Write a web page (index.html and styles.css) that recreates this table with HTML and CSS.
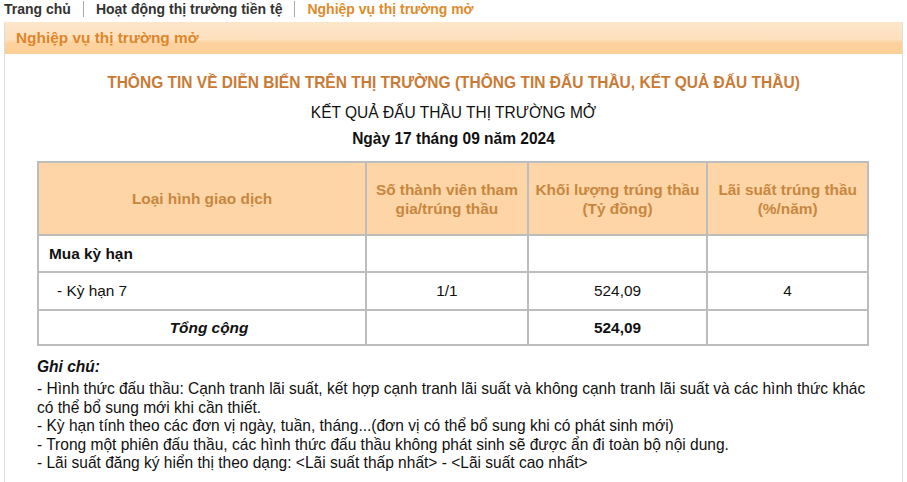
FILE: index.html
```html
<!DOCTYPE html>
<html lang="vi">
<head>
<meta charset="utf-8">
<link rel="stylesheet" href="styles.css">
</head>
<body>
<nav class="crumbs">
  <span class="crumb">Trang chủ</span>
  <span class="sep"></span>
  <span class="crumb">Hoạt động thị trường tiền tệ</span>
  <span class="sep"></span>
  <span class="crumb active">Nghiệp vụ thị trường mở</span>
</nav>
<section class="box">
  <h2 class="box-head">Nghiệp vụ thị trường mở</h2>
  <div class="box-body">
    <h1 class="title">THÔNG TIN VỀ DIỄN BIẾN TRÊN THỊ TRƯỜNG (THÔNG TIN ĐẤU THẦU, KẾT QUẢ ĐẤU THẦU)</h1>
    <p class="subtitle">KẾT QUẢ ĐẤU THẦU THỊ TRƯỜNG MỞ</p>
    <p class="date">Ngày 17 tháng 09 năm 2024</p>
    <table class="result">
      <colgroup>
        <col class="c1"><col class="c2"><col class="c3"><col class="c4">
      </colgroup>
      <thead>
        <tr>
          <th>Loại hình giao dịch</th>
          <th>Số thành viên tham gia/trúng thầu</th>
          <th>Khối lượng trúng thầu (Tỷ đồng)</th>
          <th>Lãi suất trúng thầu (%/năm)</th>
        </tr>
      </thead>
      <tbody>
        <tr class="r1"><td class="group">Mua kỳ hạn</td><td></td><td></td><td></td></tr>
        <tr class="r2"><td class="item">- Kỳ hạn 7</td><td class="num">1/1</td><td class="num">524,09</td><td class="num">4</td></tr>
        <tr class="r3"><td class="total">Tổng cộng</td><td></td><td class="num strong">524,09</td><td></td></tr>
      </tbody>
    </table>
    <div class="notes">
      <p class="notes-head">Ghi chú:</p>
      <p>- Hình thức đấu thầu: Cạnh tranh lãi suất, kết hợp cạnh tranh lãi suất và không cạnh tranh lãi suất và các hình thức khác có thể bổ sung mới khi cần thiết.</p>
      <p>- Kỳ hạn tính theo các đơn vị ngày, tuần, tháng...(đơn vị có thể bổ sung khi có phát sinh mới)</p>
      <p>- Trong một phiên đấu thầu, các hình thức đấu thầu không phát sinh sẽ được ẩn đi toàn bộ nội dung.</p>
      <p>- Lãi suất đăng ký hiển thị theo dạng: &lt;Lãi suất thấp nhất&gt; - &lt;Lãi suất cao nhất&gt;</p>
    </div>
  </div>
</section>
</body>
</html>
```
FILE: styles.css
```css
* { box-sizing: border-box; }
html, body { margin: 0; padding: 0; background: #fff; }
body {
  font-family: "Liberation Sans", Arial, sans-serif;
  font-size: 14px;
  color: #111;
  padding: 0 4px;
  overflow: hidden;
}
.crumbs {
  display: flex;
  align-items: center;
  height: 18px;
  font-weight: bold;
  font-size: 14px;
  color: #333;
}
.sep {
  width: 1px;
  height: 16px;
  background: #aaa;
  margin: 0 12px;
}
.crumb.active { color: #e08a2a; }
.box {
  margin-top: 4px;
  border-left: 1px solid #ddd;
  border-right: 1px solid #ddd;
}
.box-head {
  margin: 0;
  height: 32px;
  line-height: 32px;
  padding-left: 11px;
  font-size: 15.4px;
  font-weight: bold;
  color: #e0862a;
  background: linear-gradient(#fde6ca 0%, #fde0bd 55%, #fdd29e 65%, #fdcf98 100%);
}
.box-body { padding: 0 32px 20px 32px; }
.title, .subtitle, .date {
  text-align: center;
  font-size: 17px;
  line-height: 20px;
  transform: scaleX(0.913);
}
.title {
  margin: 19px 0 0;
  font-weight: bold;
  color: #c97b36;
}
.subtitle { margin: 10px 0 0; color: #111; }
.date { margin: 6px 0 0; font-weight: bold; }
.result {
  margin-top: 12px;
  width: 832px;
  border-collapse: collapse;
  font-size: 15.4px;
}
.c1 { width: 329px; }
.c2 { width: 162px; }
.c3 { width: 180px; }
.c4 { width: 161px; }
.result th, .result td { border: 2px solid #bdbdbd; }
.result th {
  height: 73px;
  background: #fdd5a7;
  color: #c8873f;
  font-weight: bold;
  padding: 0 6px;
  line-height: 19px;
}
.result td { padding: 0 10px; }
.r1 td { height: 37px; }
.r2 td { height: 38px; }
.r3 td { height: 35px; }
.group { font-weight: bold; }
.item { padding-left: 18px !important; }
.total { text-align: center; font-weight: bold; font-style: italic; padding-left: 24px !important; }
.num { text-align: center; }
.strong { font-weight: bold; }
.notes {
  margin-top: 12px;
  width: 911px;
  font-size: 17px;
  line-height: 18.45px;
  transform: scaleX(0.913);
  transform-origin: left top;
}
.notes p { margin: 0; }
.notes-head { font-weight: bold; font-style: italic; margin-bottom: 4px !important; }
```
